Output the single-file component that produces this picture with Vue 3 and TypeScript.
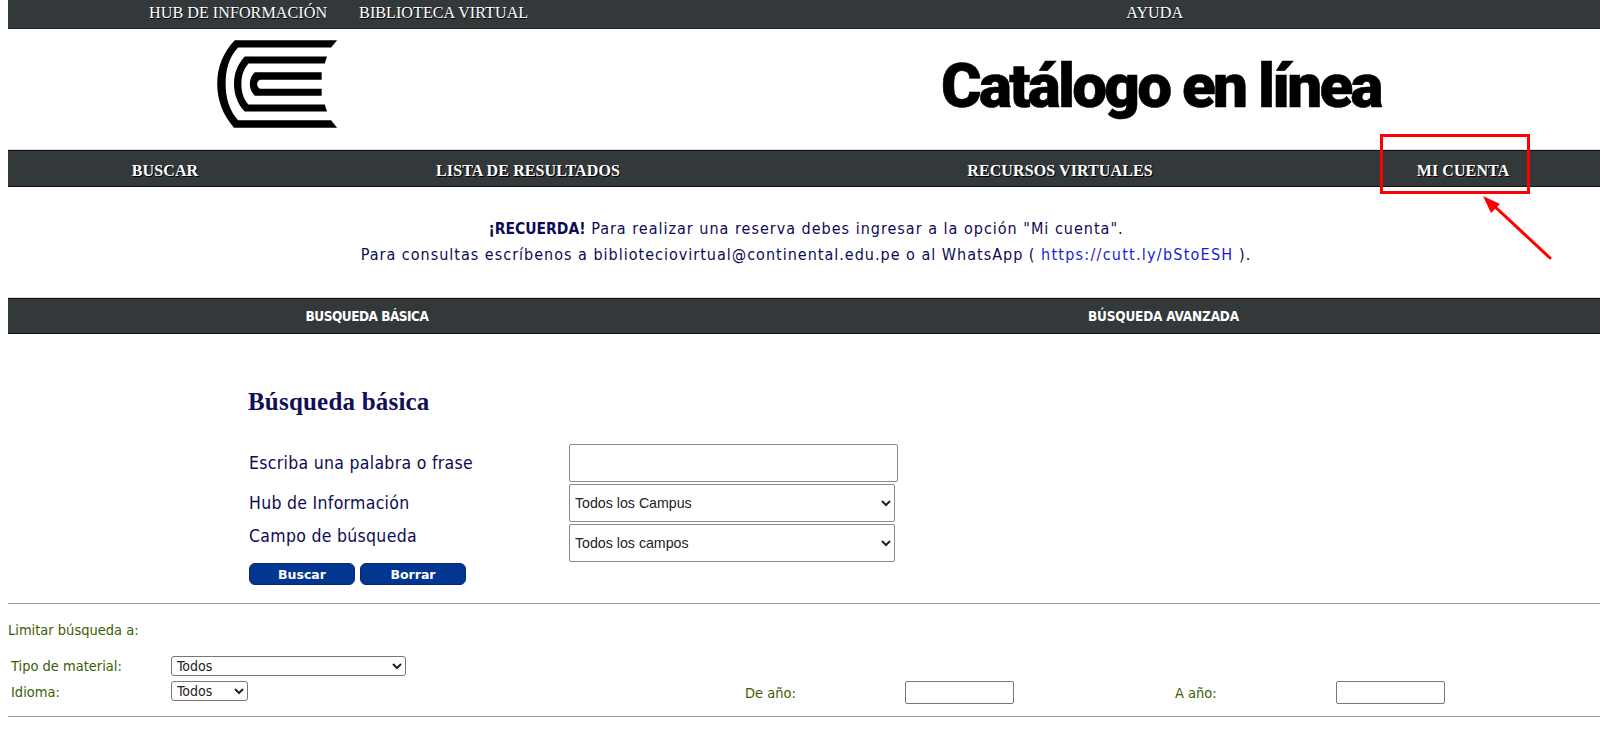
<template>
  <div class="page">
    <nav class="top-bar">
      <a>HUB DE INFORMACIÓN</a>
      <a>BIBLIOTECA VIRTUAL</a>
      <a class="help">AYUDA</a>
    </nav>

    <header class="brand">
      <svg class="logo" viewBox="50 28 365 268" aria-label="Logo">
        <path d="M105 32H410L392 53H115C85 85 78 125 78 162C78 200 88 240 115 270H392L410 292H103C70 255 53 210 53 162C53 112 70 70 105 32Z" />
        <path d="M135 80H380L373 101H146C130 120 125 140 125 162C125 185 130 205 146 223H373L380 244H135C112 220 103 190 103 162C103 132 112 105 135 80Z" />
        <path d="M165 127H364V149H180C174 153 172 157 172 162C172 168 174 172 180 176H364V197H165C155 187 150 175 150 162C150 148 155 137 165 127Z" />
      </svg>
      <h1>Catálogo en línea</h1>
    </header>

    <nav class="main-bar">
      <a v-for="item in mainNav" :key="item">{{ item }}</a>
    </nav>

    <section class="notice">
      <p><strong>¡RECUERDA!</strong> Para realizar una reserva debes ingresar a la opción "Mi cuenta".</p>
      <p>Para consultas escríbenos a biblioteciovirtual@continental.edu.pe o al WhatsApp ( <a href="#">https://cutt.ly/bStoESH</a> ).</p>
    </section>

    <nav class="search-bar">
      <a>BUSQUEDA BÁSICA</a>
      <a>BÚSQUEDA AVANZADA</a>
    </nav>

    <main class="search">
      <h2>Búsqueda básica</h2>
      <form class="search-form" @submit.prevent>
        <label>Escriba una palabra o frase</label>
        <input v-model="term" type="text" class="term" />
        <label>Hub de Información</label>
        <select><option>Todos los Campus</option></select>
        <label class="field-label">Campo de búsqueda</label>
        <select><option>Todos los campos</option></select>
        <div class="actions">
          <button type="submit">Buscar</button>
          <button type="reset" @click="term = ''">Borrar</button>
        </div>
      </form>
    </main>

    <section class="limits">
      <p class="limits-title">Limitar búsqueda a:</p>
      <div class="limits-grid">
        <label>Tipo de material:</label>
        <select class="material"><option>Todos</option></select>
        <span></span><span></span><span></span><span></span>
        <label class="language-label">Idioma:</label>
        <select class="language"><option>Todos</option></select>
        <label>De año:</label>
        <input type="text" class="year" />
        <label>A año:</label>
        <input type="text" class="year" />
      </div>
    </section>

    <div class="callout"></div>
    <svg class="arrow" width="80" height="70" viewBox="0 0 80 70">
      <line x1="67" y1="62" x2="8" y2="7" />
      <polygon points="0,0 17,8 8,17" />
    </svg>
  </div>
</template>

<script setup lang="ts">
import { ref } from 'vue';

const term = ref('');
const mainNav = ['BUSCAR', 'LISTA DE RESULTADOS', 'RECURSOS VIRTUALES', 'MI CUENTA'];
</script>

<style>
html,
body {
  margin: 0;
  background: #fff;
  overflow: hidden;
}
</style>

<style scoped>
.page {
  position: relative;
  height: 733px;
  padding-left: 8px;
  box-sizing: border-box;
  font-family: "DejaVu Sans", sans-serif;
  color: #0c0c55;
}
p,
h1,
h2 {
  margin: 0;
}

.top-bar,
.main-bar,
.search-bar {
  background: #33383b;
  color: #fff;
  box-sizing: border-box;
  align-items: center;
}
.top-bar {
  display: flex;
  height: 29px;
  padding: 0 0 2px 141px;
  gap: 32px;
  border-bottom: 1px solid #222;
  font: 16.2px "Liberation Serif", serif;
  text-shadow: 0.5px 0.5px 0 #000;
}
.help {
  margin-left: 566px;
}

.brand {
  display: flex;
  align-items: center;
  height: 121px;
  padding-left: 208px;
}
.logo {
  width: 123px;
  height: 90px;
  margin-top: -12px;
  fill: #000;
}
h1 {
  margin-left: 602px;
  margin-top: -8px;
  font: 900 62px "Roboto", sans-serif;
  letter-spacing: -2.75px;
  -webkit-text-stroke: 0.6px #000;
  color: #000;
  white-space: nowrap;
}

.main-bar {
  display: grid;
  grid-template-columns: 314px 412px 652px 154px;
  height: 37px;
  padding-top: 4px;
  border-top: 1px solid #111;
  border-bottom: 1px solid #111;
  box-shadow: 0 -1px 0 #ddd;
  font: bold 16px "Liberation Serif", serif;
  letter-spacing: 0.1px;
  text-shadow: 1px 1px 0 #000;
  text-align: center;
}

.notice {
  padding: 29px 0 30px 4px;
  height: 111px;
  box-sizing: border-box;
  text-align: center;
  font-size: 16px;
  line-height: 26px;
  letter-spacing: 1px;
  font-family: "DejaVu Sans Condensed", "DejaVu Sans", sans-serif;
}
.notice strong {
  font-size: 15.5px;
  letter-spacing: 0;
  font-weight: 700;
}
.notice a {
  color: #1a1ae0;
  letter-spacing: 1.25px;
  text-decoration: none;
}

.search-bar {
  display: grid;
  grid-template-columns: 718px 875px;
  height: 36px;
  border-top: 1px solid #111;
  border-bottom: 1px solid #111;
  box-shadow: 0 -1px 0 #ddd;
  font: bold 13.5px "DejaVu Sans Condensed", "DejaVu Sans", sans-serif;
  letter-spacing: -0.5px;
  text-align: center;
}
.search-bar a:last-child {
  letter-spacing: -0.2px;
}

.search {
  padding: 54px 0 0 240px;
}
h2 {
  font: bold 25px/28px "Liberation Serif", serif;
  letter-spacing: 0.2px;
  color: #0f0f5a;
}
.search-form {
  display: grid;
  grid-template-columns: 320px 330px;
  grid-auto-rows: 38px;
  row-gap: 2px;
  align-items: center;
  justify-items: start;
  margin-top: 28px;
  padding-left: 1px;
}
.search-form label {
  font-size: 17.5px;
  line-height: 20px;
  letter-spacing: 0.3px;
  font-family: "DejaVu Sans Condensed", "DejaVu Sans", sans-serif;
}
.search-form .field-label {
  align-self: start;
  padding-top: 2px;
}
.search-form select,
.term {
  box-sizing: border-box;
  height: 38px;
  width: 326px;
  padding: 0 1px;
  border: 1px solid #8a8a8a;
  border-radius: 2px;
  background: #fff;
  font: 14.2px "Liberation Sans", sans-serif;
  color: #222;
}
.term {
  width: 329px;
}
.actions {
  display: flex;
  gap: 5px;
  height: 22px;
  margin-top: -1px;
  align-self: start;
}
.actions button {
  width: 106px;
  height: 22px;
  padding: 0;
  border: 1px solid #0a2a6a;
  border-radius: 6px;
  background: #023690;
  color: #fff;
  font: bold 12.5px "DejaVu Sans", sans-serif;
}

.limits {
  margin-top: 1px;
  border-top: 1px solid #999;
  border-bottom: 1px solid #999;
  height: 114px;
  box-sizing: border-box;
  color: #3a6000;
  font: 14.5px "DejaVu Sans Condensed", "DejaVu Sans", sans-serif;
}
.limits-title {
  padding-top: 17px;
  line-height: 18px;
}
.limits-grid {
  display: grid;
  grid-template-columns: 160px 574px 160px 270px 161px 110px;
  grid-template-rows: 20px 23px;
  row-gap: 5px;
  align-items: center;
  justify-items: start;
  margin-top: 17px;
  padding-left: 3px;
}
.limits-grid .language-label {
  margin-top: -2px;
}
.limits-grid select {
  box-sizing: border-box;
  height: 20px;
  padding: 0 1px;
  border: 1px solid #767676;
  border-radius: 3px;
  background: #fff;
  font: 14px "DejaVu Sans Condensed", "DejaVu Sans", sans-serif;
  color: #222;
}
.limits-grid .material {
  width: 235px;
}
.limits-grid .language {
  width: 77px;
  align-self: start;
}
.year {
  box-sizing: border-box;
  width: 109px;
  height: 23px;
  border: 1px solid #767676;
  border-radius: 2px;
}

/* annotation drawn over the screenshot */
.callout {
  position: absolute;
  left: 1380px;
  top: 134px;
  width: 150px;
  height: 60px;
  box-sizing: border-box;
  border: 3px solid #f00;
}
.arrow {
  position: absolute;
  left: 1483px;
  top: 196px;
}
.arrow line {
  stroke: #f00;
  stroke-width: 3;
  stroke-linecap: round;
}
.arrow polygon {
  fill: #f00;
}
</style>
